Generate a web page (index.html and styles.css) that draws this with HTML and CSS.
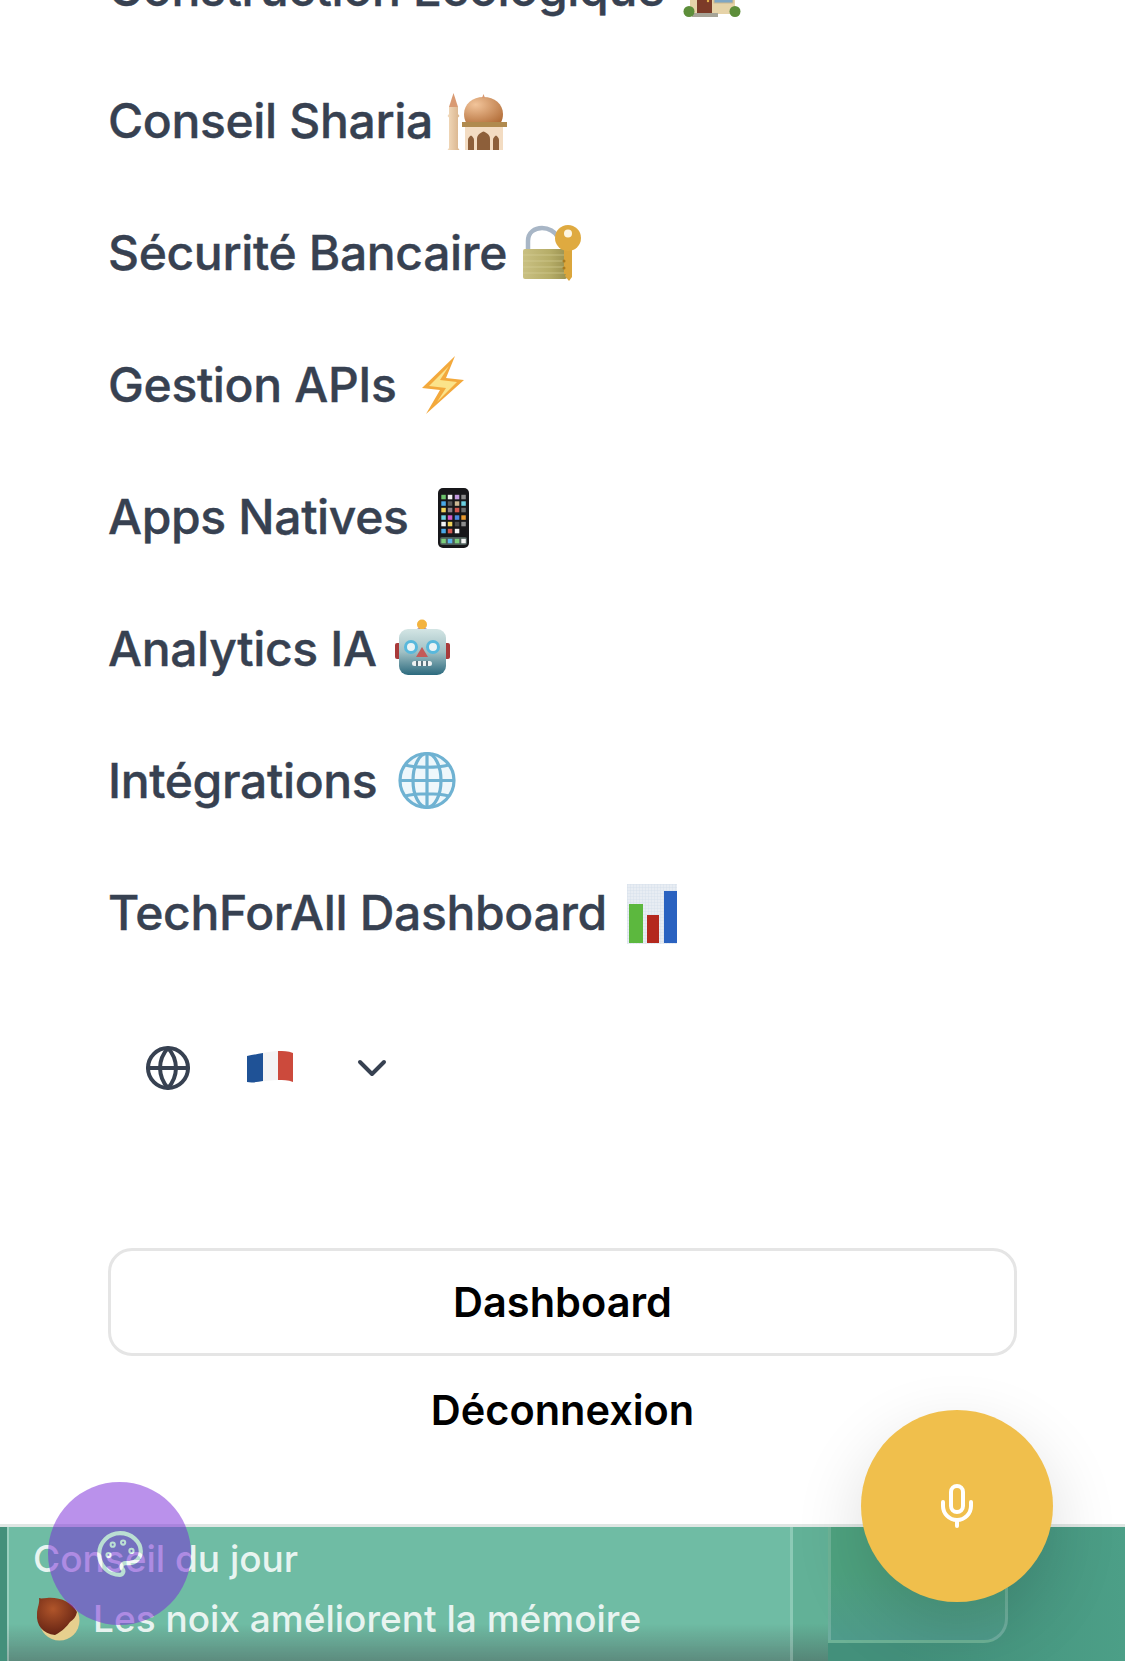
FILE: index.html
```html
<!DOCTYPE html>
<html lang="fr">
<head>
  <meta charset="UTF-8" />
  <meta name="viewport" content="width=device-width, initial-scale=1" />
  <title>TechForAll</title>
  <link rel="stylesheet" href="styles.css">
</head>
<body>
  <nav class="menu">
    <a href="#" class="menu-link">Construction Écologique
      <svg class="emoji" viewBox="0 0 60 60">
        <rect x="11" y="20" width="45" height="34" fill="#e6d3a8"/>
        <path d="M5 24 33 4l28 20z" fill="#a5573f"/>
        <rect x="35" y="30" width="19" height="13" fill="#7fa6c4" stroke="#cbb88e"/>
        <rect x="18" y="28" width="15" height="25" fill="#7c3b28"/>
        <circle cx="29" cy="41" r="1.2" fill="#e3b34c"/>
        <rect x="13" y="53" width="26" height="4" fill="#a6a497"/>
        <circle cx="10" cy="51.500" r="5.500" fill="#5d8e3a"/>
        <circle cx="56" cy="51.500" r="5.500" fill="#5d8e3a"/>
      </svg>
    </a>
    <a href="#" class="menu-link">Conseil Sharia
      <svg class="emoji" viewBox="0 0 60 60">
        <defs>
          <radialGradient id="domeFill" cx="0.3" cy="0.3" r="0.9">
            <stop offset="0" stop-color="#f2c49a"/>
            <stop offset="1" stop-color="#b26d38"/>
          </radialGradient>
          <linearGradient id="towerFill" x1="0" y1="0" x2="1" y2="0">
            <stop offset="0" stop-color="#f2dabc"/>
            <stop offset="1" stop-color="#d9b48c"/>
          </linearGradient>
        </defs>
        <path d="M6.500 1 11 15H2z" fill="#d99a72"/>
        <path d="M2 15h9v7l1.500 2-1.500 1.500V56l1.500 2H.5L2 56V25.500L.5 24 2 22z" fill="url(#towerFill)"/>
        <path d="M36.500 5c11 0 19.500 7 19.500 17 0 3-.7 6-2 8.500H19c-1.300-2.500-2-5.500-2-8.500 0-10 8.500-17 19.500-17z" fill="url(#domeFill)"/>
        <path d="M36.500 2l1.500 4h-3z" fill="#d99a72"/>
        <rect x="15" y="30" width="45" height="5" fill="#b08a4e"/>
        <rect x="18" y="35" width="38" height="23" fill="#f3dcc2"/>
        <path d="M30 58V47c0-4 3-6 6.500-7.500C40 41 43 43 43 47v11z" fill="#8d5f3a"/>
        <path d="M21 58V48c0-2 1.500-3.500 3-4.500 1.500 1 3 2.500 3 4.500v10zM46 58V48c0-2 1.500-3.500 3-4.500 1.500 1 3 2.500 3 4.500v10z" fill="#8d5f3a"/>
      </svg>
    </a>
    <a href="#" class="menu-link">Sécurité Bancaire
      <svg class="emoji" viewBox="0 0 60 60">
        <defs>
          <linearGradient id="lockFill" x1="0" y1="0" x2="1" y2="0">
            <stop offset="0" stop-color="#c9c082"/>
            <stop offset="0.6" stop-color="#b6ad68"/>
            <stop offset="1" stop-color="#9a9150"/>
          </linearGradient>
        </defs>
        <path d="M7 26V17C7 8 14 4 21 4s13 4 15 8" fill="none" stroke="#a8b6c6" stroke-width="4.500"/>
        <rect x="2" y="25" width="44" height="30" rx="2" fill="url(#lockFill)"/>
        <path d="M2 31h44M2 37h44M2 43h44M2 49h44" stroke="#d8d19a" stroke-width="1" opacity="0.6"/>
        <path d="M43 24v26l2 0-1 2 4 5 3-4V25z" fill="#dba63c"/>
        <circle cx="47" cy="14" r="13" fill="#dfaa40"/>
        <circle cx="47" cy="9.500" r="4" fill="#fdf6e3"/>
        <circle cx="43" cy="37" r="1.500" fill="#a87a1f"/>
        <circle cx="43" cy="44" r="1.500" fill="#a87a1f"/>
      </svg>
    </a>
    <a href="#" class="menu-link">Gestion APIs
      <svg class="emoji" viewBox="0 0 60 60">
        <path d="M44 0 11 32l18 2-14 24 38-34-18-2z" fill="#f3a93c"/>
        <path d="M38 10 18 30l17 2-9 14 20-20-17-2z" fill="#fbe38a"/>
      </svg>
    </a>
    <a href="#" class="menu-link">Apps Natives
      <svg class="emoji" viewBox="0 0 60 60">
        <rect x="15" y="0" width="31" height="60" rx="5" fill="#17171a"/>
        <g class="phone-icons" transform="translate(-2 0)">
          <rect x="20.300" y="6.800" width="4.500" height="4.500" fill="#6cc36c"/><rect x="26.800" y="6.800" width="4.500" height="4.500" fill="#f2f2f2"/><rect x="33.800" y="6.800" width="4.500" height="4.500" fill="#c39be0"/><rect x="40.300" y="6.800" width="4.500" height="4.500" fill="#8a8a8a"/>
          <rect x="20.300" y="13.300" width="4.500" height="4.500" fill="#4aa8e8"/><rect x="26.800" y="13.300" width="4.500" height="4.500" fill="#5a5a5a"/><rect x="33.800" y="13.300" width="4.500" height="4.500" fill="#cbb792"/><rect x="40.300" y="13.300" width="4.500" height="4.500" fill="#6cd0e0"/>
          <rect x="20.300" y="19.800" width="4.500" height="4.500" fill="#efd25a"/><rect x="26.800" y="19.800" width="4.500" height="4.500" fill="#8a7f86"/><rect x="33.800" y="19.800" width="4.500" height="4.500" fill="#d0564e"/><rect x="40.300" y="19.800" width="4.500" height="4.500" fill="#6e6e6e"/>
          <rect x="20.300" y="27.300" width="4.500" height="4.500" fill="#6cd0e0"/><rect x="26.800" y="27.300" width="4.500" height="4.500" fill="#d05ac8"/><rect x="33.800" y="27.300" width="4.500" height="4.500" fill="#4a88e0"/><rect x="40.300" y="27.300" width="4.500" height="4.500" fill="#e89a30"/>
          <rect x="20.300" y="33.800" width="4.500" height="4.500" fill="#f5f5f5"/><rect x="26.800" y="33.800" width="4.500" height="4.500" fill="#efd25a"/><rect x="33.800" y="33.800" width="4.500" height="4.500" fill="#4c4c4c"/><rect x="40.300" y="33.800" width="4.500" height="4.500" fill="#8c8c8c"/>
          <rect x="20.300" y="40.800" width="4.500" height="4.500" fill="#4aa8e8"/><rect x="26.800" y="40.800" width="4.500" height="4.500" fill="#d0564e"/><rect x="33.800" y="40.800" width="4.500" height="4.500" fill="#f5f5f5"/>
          <rect x="19" y="49" width="27" height="8" rx="2" fill="#4c5c58"/>
          <rect x="20.300" y="50.800" width="4.500" height="4.500" fill="#7ccf7c"/><rect x="26.800" y="50.800" width="4.500" height="4.500" fill="#5ab4ee"/><rect x="33.800" y="50.800" width="4.500" height="4.500" fill="#7ccf7c"/><rect x="40.300" y="50.800" width="4.500" height="4.500" fill="#f5f5f5"/>
        </g>
      </svg>
    </a>
    <a href="#" class="menu-link">Analytics IA
      <svg class="emoji" viewBox="0 0 60 60">
        <defs>
          <linearGradient id="robotFill" x1="0" y1="0" x2="0" y2="1">
            <stop offset="0" stop-color="#d3e5e4"/>
            <stop offset="0.5" stop-color="#a0c0c4"/>
            <stop offset="1" stop-color="#2c6a7e"/>
          </linearGradient>
        </defs>
        <g transform="translate(-2 0)">
          <rect x="6" y="23" width="6" height="16" rx="2" fill="#a83a3a"/>
          <rect x="55" y="23" width="6" height="16" rx="2" fill="#a83a3a"/>
          <path d="M26 12c0-3 3-4 7-4s7 1 7 4z" fill="#7a5a9a"/>
          <circle cx="33" cy="4.500" r="5" fill="#f3b33e"/>
          <rect x="10" y="9" width="47" height="46" rx="9" fill="url(#robotFill)"/>
          <circle cx="22" cy="27" r="5.500" fill="#eaf4f6" stroke="#58b8dc" stroke-width="3"/>
          <circle cx="44" cy="27" r="5.500" fill="#eaf4f6" stroke="#58b8dc" stroke-width="3"/>
          <path d="M33 27l6 10H27z" fill="#c45a58"/>
          <rect x="23" y="41" width="20" height="5" rx="2.500" fill="#eef2f2"/>
          <path d="M28 41v5M33 41v5M38 41v5" stroke="#2a4a58" stroke-width="1.500"/>
        </g>
      </svg>
    </a>
    <a href="#" class="menu-link">Intégrations
      <svg class="emoji" viewBox="0 0 60 60">
        <g fill="none" stroke="#6fb2d2" stroke-width="3.200">
          <circle cx="36" cy="28.500" r="27" fill="#eef7fb"/>
          <ellipse cx="36" cy="28.500" rx="14" ry="27"/>
          <path d="M36 1.500v54M9 28.500h54M14 13c12 3 32 3 44 0M14 44c12-3 32-3 44 0"/>
        </g>
      </svg>
    </a>
    <a href="#" class="menu-link">TechForAll Dashboard
      <svg class="emoji" viewBox="0 0 60 60">
        <defs>
          <pattern id="chartGrid" width="3" height="3" patternUnits="userSpaceOnUse">
            <path d="M3 0H0v3" fill="none" stroke="#ccd8e6" stroke-width="0.600"/>
          </pattern>
        </defs>
        <rect x="6" y="0" width="50" height="60" fill="#e8edf3"/>
        <rect x="6" y="0" width="50" height="60" fill="url(#chartGrid)"/>
        <rect x="8" y="20" width="14" height="39" fill="#5cb83e"/>
        <rect x="26" y="31" width="12" height="28" fill="#b4281e"/>
        <rect x="43" y="7" width="13" height="52" fill="#2a62c0"/>
      </svg>
    </a>
  </nav>

  <div class="lang-row">
    <svg class="line-icon" viewBox="0 0 24 24">
      <circle cx="12" cy="12" r="10"/>
      <path d="M2 12h20"/>
      <path d="M12 2a15.300 15.300 0 0 1 4 10 15.300 15.300 0 0 1-4 10 15.300 15.300 0 0 1-4-10 15.300 15.300 0 0 1 4-10z"/>
    </svg>
    <svg class="flag" viewBox="0 0 48 36">
      <path d="M1 6c5-1 11-2 16-3v28c-5 1-11 2-16 1z" fill="#1f5296"/>
      <path d="M17 3c5-1 10-2 15-2v29c-5 0-10 1-15 1z" fill="#f4f4f4"/>
      <path d="M32 1c5 0 10 0 15 2v29c-5-2-10-2-15-2z" fill="#cc4a3c"/>
    </svg>
    <svg class="line-icon" viewBox="0 0 24 24">
      <path d="m6 9 6 6 6-6"/>
    </svg>
  </div>

  <div class="account">
    <a href="#" class="btn-outline">Dashboard</a>
    <a href="#" class="btn-plain">Déconnexion</a>
  </div>

  <section class="tips">
    <div class="tip">
      <div class="tip-title">Conseil du jour</div>
      <div class="tip-text">
        <svg class="tip-emoji" viewBox="0 0 44 44">
          <defs>
            <radialGradient id="nutFill" cx="0.4" cy="0.3" r="0.8">
              <stop offset="0" stop-color="#b0552a"/>
              <stop offset="1" stop-color="#5a1c10"/>
            </radialGradient>
          </defs>
          <circle cx="23.500" cy="23.500" r="20" fill="#e6cf8e"/>
          <path d="M3 1c2 1 5 0 8 0C24 0 36 5 41 15c-1 5-4 8-7 10-3 4-7 9-15 13C7 37 0 28 1 17 1 11 4 6 3 1z" fill="url(#nutFill)"/>
        </svg>
        <span>Les noix améliorent la mémoire</span>
      </div>
    </div>
    <div class="tip-gap"></div>
    <div class="tip-next"></div>
  </section>

  <button class="fab fab-theme">
    <svg class="line-icon" viewBox="0 0 24 24">
      <circle cx="13.500" cy="6.500" r="0.500"/>
      <circle cx="17.500" cy="10.500" r="0.500"/>
      <circle cx="8.500" cy="7.500" r="0.500"/>
      <circle cx="6.500" cy="12.500" r="0.500"/>
      <path d="M12 2C6.500 2 2 6.500 2 12s4.500 10 10 10c.926 0 1.648-.746 1.648-1.688 0-.437-.18-.835-.437-1.125-.29-.289-.438-.652-.438-1.125a1.640 1.640 0 0 1 1.668-1.668h1.996c3.051 0 5.555-2.503 5.555-5.554C21.965 6.012 17.461 2 12 2z"/>
    </svg>
  </button>
  <button class="fab fab-mic">
    <svg class="line-icon" viewBox="0 0 24 24">
      <path d="M12 2a3 3 0 0 0-3 3v7a3 3 0 0 0 6 0V5a3 3 0 0 0-3-3Z"/>
      <path d="M19 10v2a7 7 0 0 1-14 0v-2"/>
      <path d="M12 19v3"/>
    </svg>
  </button>
</body>
</html>
```

FILE: styles.css
```css
* {
  box-sizing: border-box;
}
body {
  margin: 0;
  height: 1661px;
  overflow: hidden;
  position: relative;
  display: flex;
  flex-direction: column;
  background-color: white;
  font-family: "Inter", "Liberation Sans", sans-serif;
}
a {
  text-decoration: none;
}
.menu {
  display: flex;
  flex-direction: column;
  gap: 72px;
  margin-top: -42px;
  padding: 0 108px;
}
.menu-link {
  display: flex;
  align-items: center;
  gap: 14px;
  height: 60px;
  color: #374151;
  font-size: 48px;
  font-weight: 500;
  letter-spacing: -0.35px;
  -webkit-text-stroke: 0.4px #374151;
  white-space: nowrap;
}
.emoji {
  width: 60px;
  height: 60px;
  margin-top: 4px;
  flex-shrink: 0;
  overflow: visible;
}
.line-icon {
  width: 48px;
  height: 48px;
  fill: none;
  stroke: currentColor;
  stroke-width: 2;
  stroke-linecap: round;
  stroke-linejoin: round;
}
.lang-row {
  display: flex;
  align-items: center;
  gap: 54px;
  margin-top: 102px;
  padding-left: 144px;
  color: #374151;
}
.flag {
  width: 48px;
  height: 36px;
}
.account {
  display: flex;
  flex-direction: column;
  gap: 24px;
  margin-top: 156px;
  padding: 0 108px;
  text-align: center;
  color: black;
  font-size: 41.5px;
  font-weight: 600;
}
.btn-outline {
  display: flex;
  align-items: center;
  justify-content: center;
  height: 108px;
  border: 3px solid #e5e5e5;
  border-radius: 24px;
  color: inherit;
}
.btn-plain {
  line-height: 60px;
  color: inherit;
}
.tips {
  display: flex;
  height: 137px;
  margin-top: auto;
  border-top: 3px solid #dfe6e3;
  background: linear-gradient(to right, #43907b 80%, #4c9f87);
  color: rgba(255, 255, 255, 0.85);
}
.tip {
  flex-shrink: 0;
  width: 786px;
  margin-left: 7px;
  padding: 10px 0 0 24px;
  border-left: 2px solid rgba(255, 255, 255, 0.3);
  border-right: 3px solid rgba(255, 255, 255, 0.2);
  background: linear-gradient(to bottom, rgba(70, 80, 80, 0) 72%, rgba(70, 80, 80, 0.45)), #6fbca4;
  font-size: 37px;
  font-weight: 500;
}
.tip-title {
  line-height: 44px;
}
.tip-text {
  display: flex;
  align-items: center;
  gap: 13px;
  margin-top: 16px;
  margin-left: 3px;
  line-height: 44px;
}
.tip-emoji {
  width: 44px;
  height: 44px;
  flex-shrink: 0;
}
.tip-gap {
  flex-shrink: 0;
  width: 35px;
  background: linear-gradient(to bottom, rgba(70, 80, 80, 0) 72%, rgba(70, 80, 80, 0.45)), #62b197;
}
.tip-next {
  flex-shrink: 0;
  width: 180px;
  height: 116px;
  border: 3px solid rgba(255, 255, 255, 0.18);
  border-top: none;
  border-bottom-right-radius: 24px;
  background: linear-gradient(to bottom, #4ea27f 40%, #4f9b8b);
}
.fab {
  position: absolute;
  display: flex;
  align-items: center;
  justify-content: center;
  padding: 0;
  border: none;
  border-radius: 50%;
  color: white;
}
.fab-theme {
  left: 48px;
  bottom: 36px;
  width: 143px;
  height: 143px;
  background-color: #7a2cd8;
  opacity: 0.52;
}
.fab-theme .line-icon {
  width: 50px;
  height: 50px;
}
.fab-mic {
  right: 72px;
  bottom: 59px;
  width: 192px;
  height: 192px;
  background-color: #f0bf4c;
  box-shadow: 0 25px 70px rgba(0, 0, 0, 0.14);
}
```
